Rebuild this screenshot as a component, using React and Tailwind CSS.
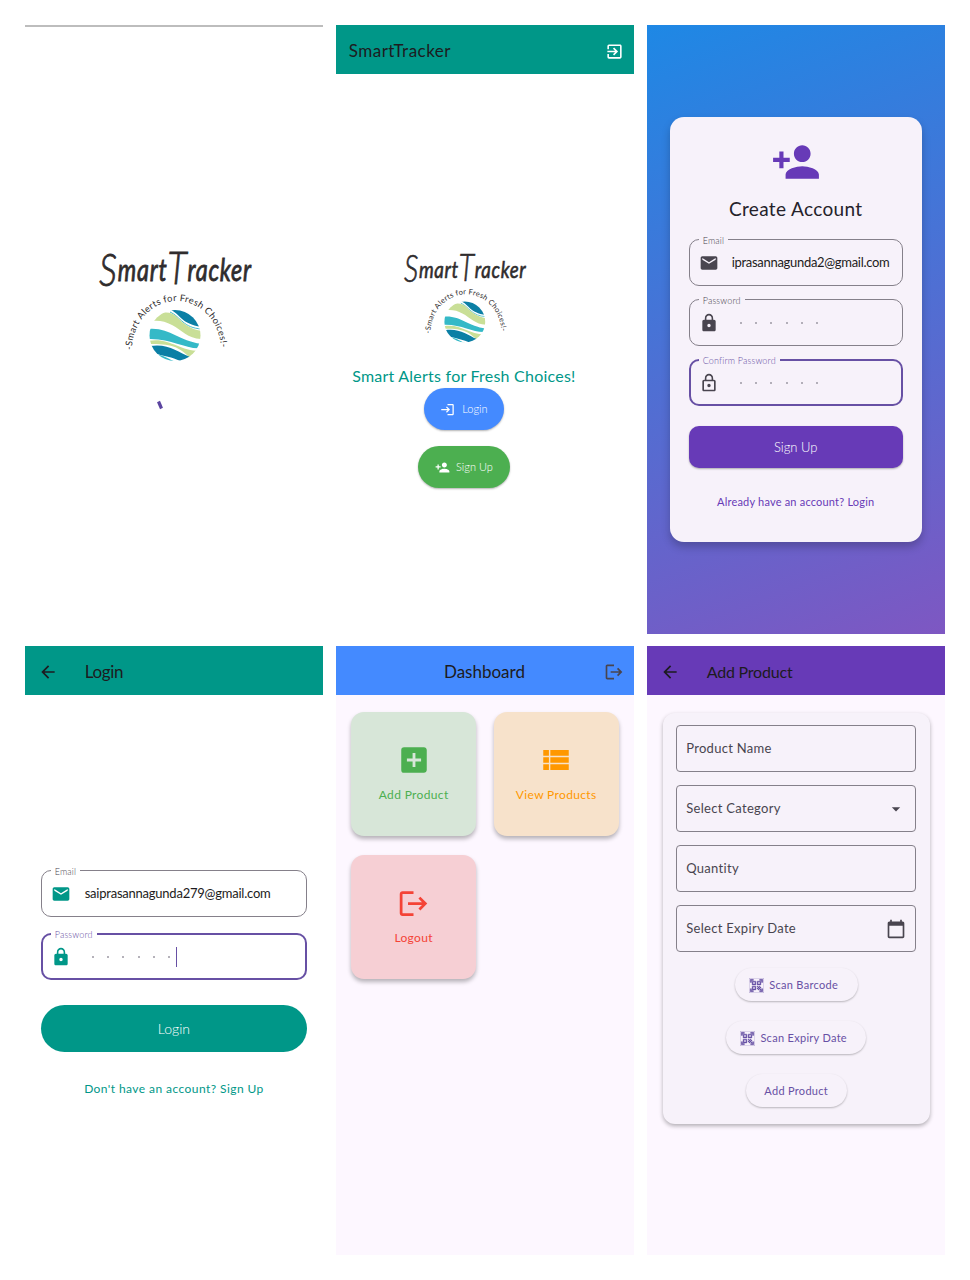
import React from "react";
import {
  MdExitToApp, MdLogin, MdPersonAdd, MdEmail, MdLock, MdLockOutline, MdArrowBack,
  MdLogout, MdAddBox, MdViewList, MdArrowDropDown, MdCalendarToday, MdQrCodeScanner,
} from "react-icons/md";

function Logo({ className, id }) {
  return (
    <svg viewBox="0 0 160 126" className={"overflow-visible " + className} aria-label="SmartTracker">
      <defs>
        <path id={id + "arc"} d="M38 103 A44.500 49 0 0 1 127 103" />
        <clipPath id={id + "clip"}><circle cx="81" cy="88.500" r="25.500" /></clipPath>
      </defs>
      <text transform="translate(5 34) scale(0.78 1)" fill="#2f2c2d" stroke="#2f2c2d" strokeWidth="0.8" fontFamily="Lato, sans-serif" fontStyle="italic" fontSize="30" textLength="195">
        <tspan fontSize="46" fontWeight="300" dy="5">S</tspan>
        <tspan dy="-5">mart</tspan>
        <tspan fontSize="46" fontWeight="300" dy="3">T</tspan>
        <tspan dy="-3">racker</tspan>
      </text>
      <text fontSize="9.300" fill="#2f2c2d" fontFamily="Lato, sans-serif">
        <textPath href={"#" + id + "arc"} textLength="144">-Smart Alerts for Fresh Choices!-</textPath>
      </text>
      <g clipPath={"url(#" + id + "clip)"}>
        <rect x="54" y="62" width="54" height="54" fill="#fff" />
        <path d="M75 62C86 66 86 77 108 80V60H75Z" fill="#0b7fa5" />
        <path d="M76 65C87 70 89 81 108 82" fill="none" stroke="#35b5c5" strokeWidth="0.9" />
        <path d="M58 73C66 63 77 64 83 70C91 78 96 82 108 84V92C94 92 88 83 78 78C71 74 65 73 56 74Z" fill="#c9df97" />
        <path d="M54 82C76 80 84 94 108 97V101C92 103 78 91 54 92Z" fill="#35b9c7" />
        <path d="M54 94C76 90 84 104 106 104V108L98 113C84 98 76 97 54 97Z" fill="#c9df97" />
        <path d="M56 99C74 96 84 105 96 110L90 116C80 110 72 110 60 106Z" fill="#0b7fa5" />
        <path d="M60 107C70 108 74 112 82 115H68Z" fill="#35b9c7" />
      </g>
    </svg>
  );
}

function Bar({ className, children }) {
  return <div className={"flex h-[49px] shrink-0 items-center pt-[3px] text-[#1d1b20] " + className}>{children}</div>;
}

function Field({ label, icon, active, labelClass, children }) {
  return (
    <div className={"relative flex h-[47px] items-center rounded-[10px] pt-px " + (active ? "border-2 border-[#6750a4] pl-[8px]" : "border border-[#85808a] pl-[9px]")}>
      <span className={"absolute px-1 text-[9px] font-light leading-[10px] tracking-[0.15px] " + (active ? "left-[8px] -top-[5px] text-[#6750a4] " : "left-[9px] -top-[4px] text-[#49454f] ") + labelClass}>{label}</span>
      {icon}
      {children}
    </div>
  );
}

function Dots() {
  return (
    <span className="ml-[21px] flex gap-[13.300px]">
      {[0, 1, 2, 3, 4, 5].map((i) => <i key={i} className="size-[2px] rounded-full bg-[#9d98a3]" />)}
    </span>
  );
}

function Tile({ className, icon, children }) {
  return (
    <div className={"flex h-[124px] w-[125px] flex-col items-center rounded-[13px] pt-[31px] text-[12px] tracking-[0.35px] shadow-[0_3px_4px_rgba(0,0,0,0.28)] " + className}>
      <span className="flex h-[34px] items-center">{icon}</span>
      <span className="mt-[10px] leading-4">{children}</span>
    </div>
  );
}

function Box({ children, icon }) {
  return (
    <div className="flex h-[47px] items-center justify-between rounded-[4px] border border-[#85808a] pl-[9px] pr-[9px] pt-px text-[13px] tracking-[0.3px] text-[#49454f]">
      <span>{children}</span>
      {icon}
    </div>
  );
}

function Pill({ className, icon, children }) {
  return (
    <div className={"flex h-[33px] items-center justify-center gap-[5px] rounded-full bg-[#f7f2fa] pt-px text-[11px] tracking-[0.3px] text-[#6750a4] shadow-[0_1px_2px_rgba(0,0,0,0.25)] " + className}>
      {icon}
      <span>{children}</span>
    </div>
  );
}

export default function App() {
  return (
    <main className="h-[1280px] w-[970px] overflow-hidden bg-white pl-[24.700px] pt-[25px] font-['Lato',sans-serif]">
      <div className="grid grid-cols-[298.500px_298.500px_298.500px] grid-rows-[609px_609px] gap-x-[12.500px] gap-y-3">
        <section className="flex flex-col items-center">
          <div className="h-[2px] w-full bg-[#bdbdbd]" />
          <Logo id="a" className="mt-[220px] h-[126px] w-[160px]" />
          <svg viewBox="0 0 10 12" className="mr-[28px] mt-[26px] h-3 w-[10px]"><path d="M3.500 2.500L6.500 9.500" stroke="#5b45a0" strokeWidth="3.200" /></svg>
        </section>

        <section className="flex flex-col items-center">
          <Bar className="w-full justify-between bg-[#009788] pl-[13px] pr-[10px]">
            <span className="text-[17px] tracking-[0.5px]">SmartTracker</span>
            <MdExitToApp className="size-[19px] text-white" />
          </Bar>
          <Logo id="b" className="mr-[41px] mt-[177px] h-[101px] w-[128px]" />
          <div className="mr-[42px] mt-[12px] whitespace-nowrap text-[16px] leading-6 tracking-[0.23px] text-[#009788]">Smart Alerts for Fresh Choices!</div>
          <div className="mr-[42px] flex h-[42px] w-[80px] items-center justify-center gap-[7px] rounded-full bg-[#448aff] text-[11px] font-light text-white shadow-[0_1px_2px_rgba(0,0,0,0.3)]"><MdLogin className="size-[15px]" />Login</div>
          <div className="mr-[42px] mt-4 flex h-[42px] w-[92px] items-center justify-center gap-[6px] rounded-full bg-[#4caf50] text-[11px] font-light text-white shadow-[0_1px_2px_rgba(0,0,0,0.3)]"><MdPersonAdd className="size-[15px]" />Sign Up</div>
        </section>

        <section className="bg-linear-[160deg,#1e88e5_0%,#7e57c2_100%] px-[23px] pt-[92px]">
          <div className="flex h-[425px] w-[252px] flex-col rounded-[14px] bg-[#f7f2fa] px-[19px] shadow-[0_5px_9px_rgba(0,0,0,0.22)]">
            <MdPersonAdd className="mt-[20px] size-[50px] self-center text-[#673ab7]" />
            <h1 className="mt-[8px] text-center text-[19px] leading-7 tracking-[0.35px] text-[#25222a]">Create Account</h1>
            <div className="mt-[16px] flex flex-col gap-[13px]">
              <Field label="Email" labelClass="bg-[#f7f2fa]" icon={<MdEmail className="size-[20px] text-[#49454f]" />}><span className="ml-[13px] text-[13px] tracking-[-0.3px] text-[#1d1b20]">iprasannagunda2@gmail.com</span></Field>
              <Field label="Password" labelClass="bg-[#f7f2fa]" icon={<MdLock className="size-[20px] text-[#49454f]" />}><Dots /></Field>
              <Field active label="Confirm Password" labelClass="bg-[#f7f2fa]" icon={<MdLockOutline className="size-[20px] text-[#49454f]" />}><Dots /></Field>
            </div>
            <div className="mt-[20px] flex h-[42px] items-center justify-center rounded-[10px] bg-[#673ab7] pt-px text-[13px] font-light text-white shadow-[0_1px_2px_rgba(0,0,0,0.3)]">Sign Up</div>
            <div className="mt-[26px] text-center text-[11px] leading-4 tracking-[0.2px] text-[#673ab7]">Already have an account? Login</div>
          </div>
        </section>

        <section className="flex flex-col">
          <Bar className="bg-[#009788] pl-[13px]"><MdArrowBack className="size-[20px]" /><span className="ml-[27px] text-[17px] tracking-[-0.3px]">Login</span></Bar>
          <div className="mx-4 mt-[175px] flex flex-col">
            <Field label="Email" labelClass="bg-white" icon={<MdEmail className="size-[20px] text-[#009788]" />}><span className="ml-[14px] text-[13px] tracking-[-0.230px] text-[#1d1b20]">saiprasannagunda279@gmail.com</span></Field>
            <div className="mt-4">
              <Field active label="Password" labelClass="bg-white" icon={<MdLock className="size-[20px] text-[#009788]" />}><Dots /><i className="ml-[6px] h-5 w-px bg-[#6750a4]" /></Field>
            </div>
            <div className="mt-[25px] flex h-[47px] items-center justify-center rounded-full bg-[#009788] text-[14px] font-light text-white">Login</div>
            <div className="mt-[27px] text-center text-[12px] leading-5 tracking-[0.430px] text-[#009788]">Don't have an account? Sign Up</div>
          </div>
        </section>

        <section className="bg-[#fdf7ff]">
          <Bar className="bg-[#448aff] pr-[10px]"><span className="ml-[42px] flex-1 text-center text-[17px]">Dashboard</span><MdLogout className="ml-[13px] size-[20px] text-[#49454f]" /></Bar>
          <div className="grid grid-cols-[125px_125px] gap-x-[17.500px] gap-y-[19px] pl-[15.500px] pt-[17px]">
            <Tile className="bg-[#d7e6d8] text-[#4caf50]" icon={<MdAddBox className="size-[34px]" />}>Add Product</Tile>
            <Tile className="bg-[#f7e2cb] text-[#ff9800]" icon={<MdViewList className="size-[34px]" />}>View Products</Tile>
            <Tile className="bg-[#f6cfd4] text-[#f44336]" icon={<MdLogout className="size-[33px]" />}>Logout</Tile>
          </div>
        </section>

        <section className="bg-[#fdf7ff]">
          <Bar className="bg-[#673ab7] pl-[13px]"><MdArrowBack className="size-[20px]" /><span className="ml-[27px] text-[16px] tracking-[-0.2px]">Add Product</span></Bar>
          <div className="ml-4 mt-[18px] flex h-[411px] w-[267px] flex-col rounded-[12px] bg-[#f7f2fa] px-[13.500px] pt-[12px] shadow-[0_2px_4px_rgba(0,0,0,0.3)]">
            <div className="flex flex-col gap-[13px]">
              <Box>Product Name</Box>
              <Box icon={<MdArrowDropDown className="size-5" />}>Select Category</Box>
              <Box>Quantity</Box>
              <Box icon={<MdCalendarToday className="size-5" />}>Select Expiry Date</Box>
            </div>
            <div className="mt-[16px] flex flex-col items-center gap-5">
              <Pill className="w-[123px] pr-[5px]" icon={<MdQrCodeScanner className="size-[15px] stroke-[#6750a4] stroke-[0.600]" />}>Scan Barcode</Pill>
              <Pill className="w-[140px] pr-[5px]" icon={<MdQrCodeScanner className="size-[15px] stroke-[#6750a4] stroke-[0.600]" />}>Scan Expiry Date</Pill>
              <Pill className="w-[101px]">Add Product</Pill>
            </div>
          </div>
        </section>
      </div>
    </main>
  );
}
